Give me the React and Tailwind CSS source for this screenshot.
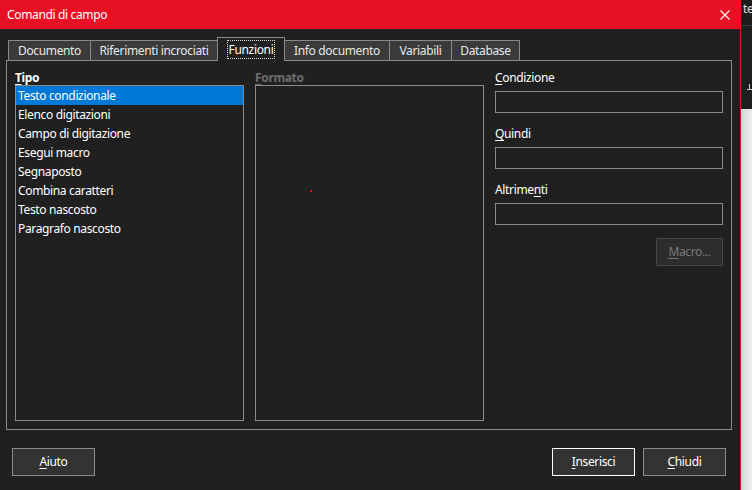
import React from "react";

const U = ({ children }) => (
  <span className="underline decoration-1 underline-offset-[2px]">{children}</span>
);

const tabs = [
  { label: "Documento", w: "w-[83px]" },
  { label: "Riferimenti incrociati", w: "w-[128px]" },
  { label: "Funzioni", w: "w-[68px]", active: true },
  { label: "Info documento", w: "w-[106px]" },
  { label: "Variabili", w: "w-[63px]" },
  { label: "Database", w: "w-[69px]" },
];

const items = [
  "Testo condizionale",
  "Elenco digitazioni",
  "Campo di digitazione",
  "Esegui macro",
  "Segnaposto",
  "Combina caratteri",
  "Testo nascosto",
  "Paragrafo nascosto",
];

function Field({ label }) {
  return (
    <div className="flex flex-col">
      <div className="h-[15px] leading-[15px] text-[12px] text-white">{label}</div>
      <div className="mt-[6px] h-[22px] border border-[#8a8a8a] bg-[#202020]" />
    </div>
  );
}

function Button({ children, focused, disabled, className = "" }) {
  return (
    <div
      className={
        "h-[28px] flex items-center justify-center text-[12px] border " +
        (disabled
          ? "bg-[#2d2d2d] border-[#474747] text-[#787878] "
          : focused
          ? "bg-[#333333] border-white text-white "
          : "bg-[#333333] border-[#8b8b8b] text-white ") +
        className
      }
    >
      {children}
    </div>
  );
}

export default function App() {
  return (
    <div className="w-[752px] h-[490px] flex overflow-hidden bg-[#202020] text-white font-['Noto_Sans',sans-serif] tracking-[-0.35px]">
      {/* Dialog */}
      <div className="w-[741px] h-full shrink-0 flex flex-col border-r border-[#e81123]">
        {/* Title bar */}
        <div className="h-[29px] shrink-0 bg-[#e81123] flex items-center justify-between pl-[7px] pr-[10px] text-[12px] text-white">
          <span>Comandi di campo</span>
          <svg width="10" height="10" viewBox="0 0 10 10" className="block">
            <path d="M0.5 0.5 L9.5 9.5 M9.5 0.5 L0.5 9.5" stroke="white" strokeWidth="1.1" fill="none" />
          </svg>
        </div>

        {/* Body */}
        <div className="flex-1 flex flex-col pl-[6px] pr-[8px] pt-[8px]">
          {/* Tabs */}
          <div className="h-[23px] flex items-end pl-[2px] shrink-0">
            {tabs.map((t, i) =>
              t.active ? (
                <div
                  key={t.label}
                  className={`${t.w} -ml-px h-[24px] -mb-px relative z-10 bg-[#202020] border border-b-0 border-[#8a8a8a] flex justify-center items-start pt-[2px] text-[12px] text-white`}
                >
                  <span className="h-[19px] leading-[17px] px-[1px] border border-dotted border-[#e0e0e0]">
                    {t.label}
                  </span>
                </div>
              ) : (
                <div
                  key={t.label}
                  className={`${t.w} ${i > 0 ? "-ml-px" : ""} h-[20px] bg-[#3a3a3a] border border-b-0 border-[#8a8a8a] flex items-center justify-center text-[12px] text-[#e8e8e8]`}
                >
                  {t.label}
                </div>
              )
            )}
          </div>

          {/* Pane */}
          <div className="h-[370px] shrink-0 border border-[#8a8a8a] flex gap-[11px] px-[8px] pt-[9px] pb-[8px]">
            {/* Tipo */}
            <div className="w-[229px] flex flex-col">
              <div className="h-[15px] leading-[15px] text-[12px] font-bold text-white">
                <U>T</U>ipo
              </div>
              <div className="flex-1 border border-[#8a8a8a] bg-[#202020] flex flex-col">
                {items.map((it, i) => (
                  <div
                    key={it}
                    className={
                      "h-[19px] leading-[19px] pl-[2px] text-[12px] text-white " +
                      (i === 0 ? "bg-[#0078d7]" : "")
                    }
                  >
                    {it}
                  </div>
                ))}
              </div>
            </div>

            {/* Formato */}
            <div className="w-[229px] flex flex-col">
              <div className="h-[15px] leading-[15px] text-[12px] font-bold text-[#6e6e6e]">
                <U>F</U>ormato
              </div>
              <div className="flex-1 border border-[#8a8a8a] bg-[#202020] relative">
                <div className="absolute left-[54px] top-[104px] w-[2px] h-[2px] bg-[#ff0000]" />
              </div>
            </div>

            {/* Right column */}
            <div className="w-[228px] flex flex-col gap-[13px]">
              <Field label={<><U>C</U>ondizione</>} />
              <Field label={<><U>Q</U>uindi</>} />
              <Field label={<>Altrime<U>n</U>ti</>} />
              <div className="flex justify-end">
                <Button disabled className="w-[67px]">
                  <U>M</U>acro...
                </Button>
              </div>
            </div>
          </div>

          {/* Buttons */}
          <div className="mt-[18px] flex items-center px-[6px]">
            <Button className="w-[83px]">
              <U>A</U>iuto
            </Button>
            <div className="flex-1" />
            <Button focused className="w-[83px]">
              <U>I</U>nserisci
            </Button>
            <Button className="w-[83px] ml-[8px]">
              <U>C</U>hiudi
            </Button>
          </div>
        </div>
      </div>

      {/* Background window strip */}
      <div className="flex-1 flex flex-col">
        <div className="h-[26px] bg-[#1c1c1c] border-b border-[#3a3a3a] pl-[2px] text-[12px] leading-[18px] text-[#e0e0e0] overflow-hidden whitespace-nowrap">
          te
        </div>
        <div className="h-[83px] bg-[#1e1e1e] flex flex-col items-end pt-[58px]">
          <div className="w-[1px] h-[5px] bg-[#d0d0d0] mr-[3px]" />
          <div className="w-[6px] h-[1px] bg-[#d0d0d0]" />
        </div>
        <div className="flex-1 bg-linear-to-r from-[#d6d6d6] to-[#f0f0f0]" />
      </div>
    </div>
  );
}
